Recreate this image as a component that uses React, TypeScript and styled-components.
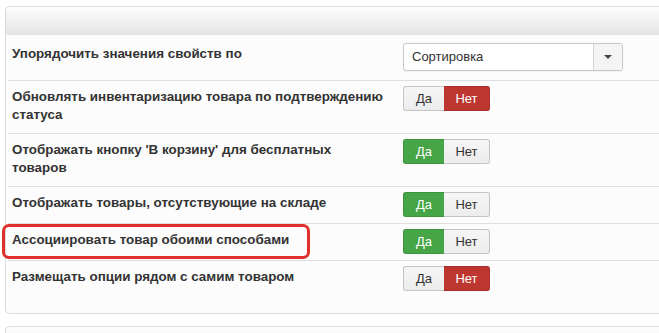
import React from 'react';
import styled, { createGlobalStyle } from 'styled-components';

const GlobalStyle = createGlobalStyle`
  html, body {
    margin: 0;
    padding: 0;
    background: #fff;
    overflow: hidden;
  }
  body {
    font-family: 'Liberation Sans', Arial, sans-serif;
    color: #333;
  }
`;

type Choice = 'yes' | 'no';

const rows: { label: string; value: Choice; marked?: boolean }[] = [
  { label: 'Обновлять инвентаризацию товара по подтверждению статуса', value: 'no' },
  { label: "Отображать кнопку 'В корзину' для бесплатных товаров", value: 'yes' },
  { label: 'Отображать товары, отсутствующие на складе', value: 'yes' },
  { label: 'Ассоциировать товар обоими способами', value: 'yes', marked: true },
  { label: 'Размещать опции рядом с самим товаром', value: 'no' },
];

const App: React.FC = () => (
  <>
    <GlobalStyle />
    <Page>
      <Panel>
        <PanelHeader />
        <Row first>
          <Label>Упорядочить значения свойств по</Label>
          <Select>
            <SelectValue>Сортировка</SelectValue>
            <SelectArrow>
              <Caret />
            </SelectArrow>
          </Select>
        </Row>
        {rows.map((row) => (
          <Row key={row.label}>
            {row.marked && <Highlight />}
            <Label>{row.label}</Label>
            <Toggle>
              <ToggleButton active={row.value === 'yes'} tone="yes">
                Да
              </ToggleButton>
              <ToggleButton active={row.value === 'no'} tone="no">
                Нет
              </ToggleButton>
            </Toggle>
          </Row>
        ))}
      </Panel>
      <NextPanel />
    </Page>
  </>
);

export default App;

const Page = styled.div`
  padding: 6px 0 0 5px;
  width: 720px;
`;

const Panel = styled.div`
  position: relative;
  background: #fcfcfc;
  border: 1px solid #dcdcdc;
  border-right: none;
  border-radius: 5px 0 0 5px;
  padding-bottom: 16px;
`;

const PanelHeader = styled.div`
  height: 28px;
  border-radius: 4px 0 0 0;
  background: linear-gradient(to bottom, #fdfdfd, #e4e4e4);
`;

const Row = styled.div<{ first?: boolean }>`
  position: relative;
  display: flex;
  align-items: flex-start;
  padding: ${(p) => (p.first ? '8px 0 9px' : '5px 0 6px')};
  margin-left: 2px;
  border-top: ${(p) => (p.first ? 'none' : '1px solid #dedede')};
`;

const Label = styled.div`
  box-sizing: border-box;
  width: 395px;
  padding: 2px 20px 3px 4px;
  font-size: 13.4px;
  font-weight: bold;
  line-height: 18px;
  color: #333;
`;

const Select = styled.div`
  display: flex;
  box-sizing: border-box;
  width: 220px;
  height: 28px;
  background: #fff;
  border: 1px solid #c8c8c8;
  border-radius: 3px;
  box-shadow: 0 1px 1px rgba(0, 0, 0, 0.05);
  overflow: hidden;
`;

const SelectValue = styled.div`
  flex: 1;
  padding-left: 8px;
  font-size: 13px;
  line-height: 26px;
  color: #333;
`;

const SelectArrow = styled.div`
  width: 28px;
  display: flex;
  align-items: center;
  justify-content: center;
  background: #f4f4f4;
  border-left: 1px solid #d4d4d4;
`;

const Caret = styled.span`
  width: 0;
  height: 0;
  border-left: 4px solid transparent;
  border-right: 4px solid transparent;
  border-top: 4px solid #444;
`;

const Toggle = styled.div`
  display: flex;
  height: 25px;
`;

const ToggleButton = styled.div<{ active: boolean; tone: Choice }>`
  box-sizing: border-box;
  display: flex;
  align-items: center;
  justify-content: center;
  width: ${(p) => (p.tone === 'yes' ? '41px' : '46px')};
  font-size: 13px;
  color: ${(p) => (p.active ? '#fff' : '#333')};
  background: ${(p) =>
    p.active ? (p.tone === 'yes' ? '#46a546' : '#bd362f') : 'linear-gradient(#f6f6f6, #ececec)'};
  border: 1px solid
    ${(p) => (p.active ? (p.tone === 'yes' ? '#3e943e' : '#a9302a') : '#c4c4c4')};
  border-radius: ${(p) => (p.tone === 'yes' ? '3px 0 0 3px' : '0 3px 3px 0')};
  ${(p) => (p.tone === 'no' ? 'border-left: none;' : 'border-right: none;')}
`;

const Highlight = styled.div`
  position: absolute;
  left: -6px;
  top: 0;
  width: 308px;
  height: 35px;
  box-sizing: border-box;
  border: 3px solid #e0302c;
  border-radius: 7px;
  pointer-events: none;
`;

const NextPanel = styled.div`
  margin-top: 12px;
  height: 20px;
  border: 1px solid #dcdcdc;
  border-right: none;
  border-bottom: none;
  border-radius: 5px 0 0 0;
  background: linear-gradient(to bottom, #fdfdfd, #f0f0f0);
`;
